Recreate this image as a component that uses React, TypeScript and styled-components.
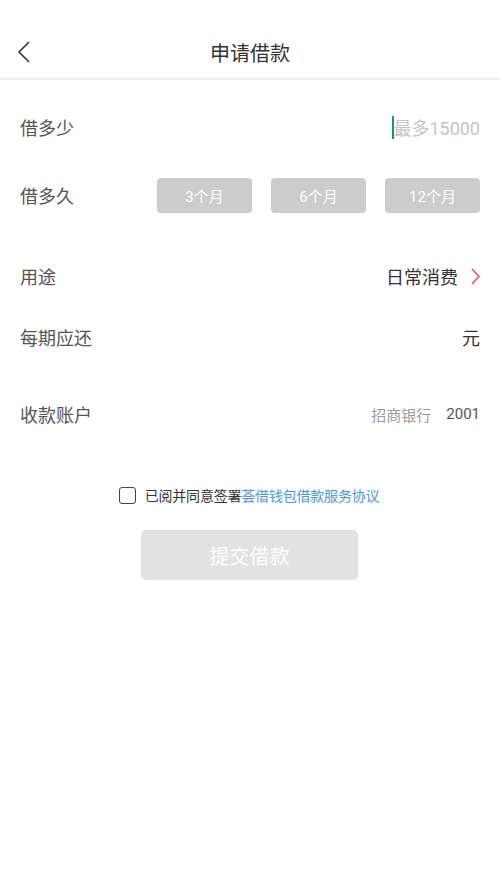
import styled, { createGlobalStyle } from "styled-components";

const GlobalStyle = createGlobalStyle`
    html, body {
        margin: 0;
        padding: 0;
        background: #fff;
    }
    body {
        font-family: Roboto, "Noto Sans CJK SC", "Noto Sans", sans-serif;
    }
`;

const Page = styled.div`
    width: 500px;
    min-height: 889px;
    background: #fff;
    display: flex;
    flex-direction: column;
`;

const Header = styled.div`
    height: 80px;
    border-bottom: 2px solid #eeeeee;
    display: flex;
    align-items: center;
    justify-content: center;
    position: relative;
    padding-top: 27px;
    box-sizing: border-box;
`;

const BackButton = styled.button`
    position: absolute;
    left: 14px;
    top: 40px;
    background: none;
    border: none;
    padding: 0;
    width: 20px;
    height: 24px;
    display: flex;
    align-items: center;
    justify-content: center;
`;

const Title = styled.div`
    font-size: 20px;
    color: #333;
`;

const Row = styled.div<{ $gap: number }>`
    height: 50px;
    margin-top: ${(p) => p.$gap}px;
    padding: 0 20px 0 20px;
    display: flex;
    align-items: center;
    justify-content: space-between;
`;

const Label = styled.div`
    font-size: 18px;
    color: #555;
`;

const AmountField = styled.div`
    display: flex;
    align-items: center;
    font-size: 18px;
    color: #c4c4c4;
`;

const Cursor = styled.span`
    width: 2px;
    height: 23px;
    background: #17957c;
    margin-right: -1px;
`;

const Terms = styled.div`
    display: flex;
    gap: 19px;
`;

const TermButton = styled.button`
    width: 95px;
    height: 35px;
    border: none;
    border-radius: 4px;
    background: #cccccc;
    color: #fff;
    font-family: inherit;
    font-size: 15px;
    padding: 0;
`;

const Value = styled.div`
    display: flex;
    align-items: center;
    gap: 13px;
    font-size: 18px;
    color: #333;
`;

const BankName = styled.span`
    font-size: 15px;
    color: #9a9a9a;
    margin-right: 2px;
`;

const CardNo = styled.span`
    font-size: 15px;
    color: #555;
`;

const Agreement = styled.label`
    margin-top: 41px;
    height: 30px;
    display: flex;
    align-items: center;
    justify-content: center;
    font-size: 14px;
    color: #333;
    letter-spacing: -0.2px;
`;

const Box = styled.span`
    width: 15px;
    height: 15px;
    border: 1.5px solid #444;
    border-radius: 3px;
    margin-right: 9px;
    margin-left: -2px;
`;

const Link = styled.span`
    color: #4a98e0;
`;

const SubmitButton = styled.button`
    align-self: center;
    margin-top: 20px;
    margin-left: -1px;
    width: 217px;
    height: 50px;
    border: none;
    border-radius: 5px;
    background: #e2e2e2;
    color: #fff;
    font-family: inherit;
    font-size: 20px;
`;

function App() {
    return (
        <Page>
            <GlobalStyle />
            <Header>
                <BackButton aria-label="back">
                    <svg width="14" height="22" viewBox="0 0 14 22">
                        <polyline points="12,1 2,11 12,21" fill="none" stroke="#333" strokeWidth="1.6" />
                    </svg>
                </BackButton>
                <Title>申请借款</Title>
            </Header>

            <Row $gap={22}>
                <Label>借多少</Label>
                <AmountField>
                    <Cursor />
                    最多15000
                </AmountField>
            </Row>

            <Row $gap={18}>
                <Label>借多久</Label>
                <Terms>
                    {["3个月", "6个月", "12个月"].map((t) => (
                        <TermButton key={t}>{t}</TermButton>
                    ))}
                </Terms>
            </Row>

            <Row $gap={31}>
                <Label>用途</Label>
                <Value>
                    日常消费
                    <svg width="9" height="17" viewBox="0 0 9 17">
                        <polyline points="1,1 8,8.5 1,16" fill="none" stroke="#e25555" strokeWidth="1.5" />
                    </svg>
                </Value>
            </Row>

            <Row $gap={11}>
                <Label>每期应还</Label>
                <Value>元</Value>
            </Row>

            <Row $gap={27}>
                <Label>收款账户</Label>
                <Value>
                    <BankName>招商银行</BankName>
                    <CardNo>2001</CardNo>
                </Value>
            </Row>

            <Agreement>
                <Box />
                已阅并同意签署<Link>荟借钱包借款服务协议</Link>
            </Agreement>

            <SubmitButton>提交借款</SubmitButton>
        </Page>
    );
}

export default App;
